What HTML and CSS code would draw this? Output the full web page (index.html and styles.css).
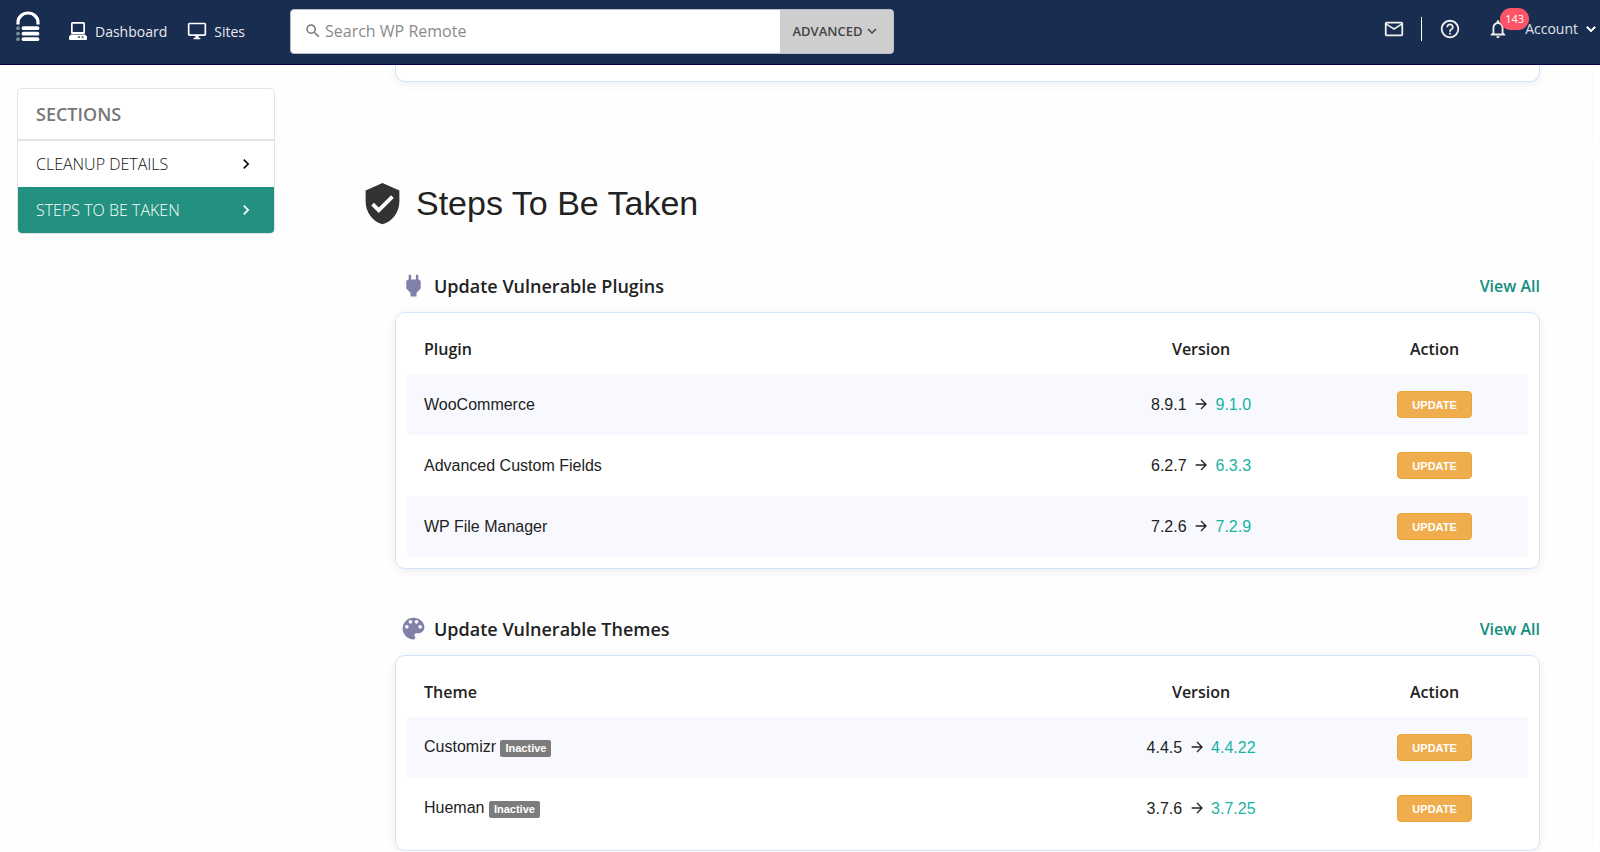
FILE: index.html
```html
<!DOCTYPE html>
<html lang="en">
<head>
  <meta charset="utf-8">
  <meta name="viewport" content="width=device-width, initial-scale=1">
  <title>WP Remote</title>
  <link rel="stylesheet" href="styles.css">
</head>
<body>
  <header class="navbar">
    <a class="logo" href="#" aria-label="Home">
      <svg width="24" height="32" viewBox="0 0 24 32">
        <path d="M2 13.5V11.5a10 9.5 0 0 1 20 0V13.5" fill="none" stroke="#fff" stroke-width="3.2"/>
        <g stroke="#fff" stroke-width="3.8" stroke-linecap="round">
          <path d="M7.500 17.200H21.500M7.500 22.700H21.500M7.500 28.200H21.500"/>
        </g>
        <g fill="#6f8f9c">
          <circle cx="2" cy="17.200" r="1.900"/><circle cx="2" cy="22.700" r="1.900"/><circle cx="2" cy="28.200" r="1.900"/>
        </g>
      </svg>
    </a>
    <nav class="nav-links">
      <a href="#">
        <svg width="20" height="20" viewBox="0 0 20 20" fill="#fff">
          <path fill-rule="evenodd" d="M4.500 1h11A1.500 1.500 0 0 1 17 2.500v9a1.500 1.500 0 0 1-1.500 1.500h-11A1.500 1.500 0 0 1 3 11.500v-9A1.500 1.500 0 0 1 4.500 1zM4.700 2.700v8.300h10.600V2.700z"/>
          <path fill-rule="evenodd" d="M3 13.500h14l2 2V18a1 1 0 0 1-1 1H2a1 1 0 0 1-1-1v-2.500zM10 15.500v1.200h2v-1.200zM13.500 15.500v1.200h2v-1.200z"/>
        </svg>
        Dashboard
      </a>
      <a href="#">
        <svg width="20" height="20" viewBox="0 0 24 24" fill="#fff"><path d="M21,16H3V4H21M21,2H3C1.890,2 1,2.890 1,4V16A2,2 0 0,0 3,18H10V20H8V22H16V20H14V18H21A2,2 0 0,0 23,16V4C23,2.890 22.100,2 21,2Z"/></svg>
        Sites
      </a>
    </nav>
    <form class="search">
      <svg width="18" height="18" viewBox="0 0 24 24" fill="#777"><path d="M15.500 14h-.79l-.28-.27A6.471 6.471 0 0 0 16 9.500 6.500 6.500 0 1 0 9.500 16c1.610 0 3.090-.59 4.230-1.570l.27.28v.79l5 4.990L20.490 19l-4.990-5zm-6 0C7.010 14 5 11.990 5 9.500S7.010 5 9.500 5 14 7.010 14 9.500 11.990 14 9.500 14z"/></svg>
      <input type="text" placeholder="Search WP Remote" aria-label="Search WP Remote">
      <button type="button" class="advanced">
        ADVANCED
        <svg width="18" height="18" viewBox="0 0 24 24" fill="#444"><path d="M16.590 8.590L12 13.170 7.410 8.590 6 10l6 6 6-6z"/></svg>
      </button>
    </form>
    <div class="nav-right">
      <a href="#" aria-label="Messages"><svg width="22" height="22" viewBox="0 0 24 24" fill="#eee"><path d="M22 6c0-1.100-.9-2-2-2H4c-1.100 0-2 .9-2 2v12c0 1.100.9 2 2 2h16c1.100 0 2-.9 2-2V6zm-2 0l-8 5-8-5h16zm0 12H4V8l8 5 8-5v10z"/></svg></a>
      <span class="divider"></span>
      <a href="#" aria-label="Help"><svg width="22" height="22" viewBox="0 0 24 24" fill="#eee"><path d="M11 18h2v-2h-2v2zm1-16C6.480 2 2 6.480 2 12s4.480 10 10 10 10-4.480 10-10S17.520 2 12 2zm0 18c-4.410 0-8-3.590-8-8s3.590-8 8-8 8 3.590 8 8-3.590 8-8 8zm0-14c-2.210 0-4 1.790-4 4h2c0-1.100.9-2 2-2s2 .9 2 2c0 2-3 1.750-3 5h2c0-2.250 3-2.500 3-5 0-2.210-1.790-4-4-4z"/></svg></a>
      <a href="#" class="bell" aria-label="Notifications">
        <svg width="22" height="22" viewBox="0 0 24 24" fill="#eee"><path d="M12 22c1.100 0 2-.9 2-2h-4c0 1.100.9 2 2 2zm6-6v-5c0-3.070-1.630-5.640-4.500-6.320V4c0-.83-.67-1.500-1.500-1.500s-1.500.67-1.500 1.500v.68C7.640 5.360 6 7.920 6 11v5l-2 2v1h16v-1l-2-2zm-2 1H8v-6c0-2.480 1.510-4.500 4-4.500s4 2.020 4 4.500v6z"/></svg>
        <span class="badge">143</span>
      </a>
      <a href="#" class="account">
        Account
        <svg width="18" height="18" viewBox="0 0 24 24" fill="#fff"><path d="M16.590 8.590L12 13.170 7.410 8.590 6 10l6 6 6-6z" stroke="#fff"/></svg>
      </a>
    </div>
  </header>

  <div class="layout">
    <aside class="sidebar">
      <h2>SECTIONS</h2>
      <a href="#">CLEANUP DETAILS <svg width="20" height="20" viewBox="0 0 24 24" fill="currentColor"><path d="M10 6L8.590 7.410 13.170 12l-4.580 4.590L10 18l6-6z"/></svg></a>
      <a href="#steps" class="active">STEPS TO BE TAKEN <svg width="20" height="20" viewBox="0 0 24 24" fill="currentColor"><path d="M10 6L8.590 7.410 13.170 12l-4.580 4.590L10 18l6-6z"/></svg></a>
    </aside>

    <main>
      <section class="panel panel-prev">
        <div class="card card-end"></div>
      </section>

      <section class="panel" id="steps">
        <h1>
          <svg width="45" height="45" viewBox="0 0 24 24" fill="#333"><path d="M12 1L3 5v6c0 5.550 3.840 10.740 9 12 5.160-1.260 9-6.450 9-12V5l-9-4zm-2 16l-4-4 1.410-1.410L10 14.170l6.590-6.590L18 9l-8 8z"/></svg>
          Steps To Be Taken
        </h1>

        <div class="block">
          <div class="block-head">
            <h3>
              <svg width="29" height="29" viewBox="0 0 24 24" fill="#8180a9"><path d="M16,7V3H14V7H10V3H8V7H8C7,7 6,8 6,9V14.500L9.500,18V21H14.500V18L18,14.500V9C18,8 17,7 16,7Z"/></svg>
              Update Vulnerable Plugins
            </h3>
            <a href="#">View All</a>
          </div>
          <div class="card">
            <table>
              <thead>
                <tr><th>Plugin</th><th class="col-version">Version</th><th class="col-action">Action</th></tr>
              </thead>
              <tbody>
                <tr>
                  <td>WooCommerce</td>
                  <td>8.9.1 <svg class="arrow" width="16" height="16" viewBox="0 0 24 24"><path d="M4 12H19M12 4.500L19.500 12 12 19.500"/></svg> <span class="new">9.1.0</span></td>
                  <td><button type="button">UPDATE</button></td>
                </tr>
                <tr>
                  <td>Advanced Custom Fields</td>
                  <td>6.2.7 <svg class="arrow" width="16" height="16" viewBox="0 0 24 24"><path d="M4 12H19M12 4.500L19.500 12 12 19.500"/></svg> <span class="new">6.3.3</span></td>
                  <td><button type="button">UPDATE</button></td>
                </tr>
                <tr>
                  <td>WP File Manager</td>
                  <td>7.2.6 <svg class="arrow" width="16" height="16" viewBox="0 0 24 24"><path d="M4 12H19M12 4.500L19.500 12 12 19.500"/></svg> <span class="new">7.2.9</span></td>
                  <td><button type="button">UPDATE</button></td>
                </tr>
              </tbody>
            </table>
          </div>
        </div>

        <div class="block">
          <div class="block-head">
            <h3>
              <svg width="29" height="29" viewBox="0 0 24 24" fill="#8180a9"><path d="M12 3c-4.970 0-9 4.030-9 9s4.030 9 9 9c.83 0 1.500-.67 1.500-1.500 0-.39-.15-.74-.39-1.010-.23-.26-.38-.61-.38-.99 0-.83.67-1.500 1.500-1.500H16c2.760 0 5-2.240 5-5 0-4.420-4.030-8-9-8zm-5.500 9c-.83 0-1.500-.67-1.500-1.500S5.670 9 6.500 9 8 9.670 8 10.500 7.330 12 6.500 12zm3-4C8.670 8 8 7.330 8 6.500S8.670 5 9.500 5s1.500.67 1.500 1.500S10.330 8 9.500 8zm5 0c-.83 0-1.500-.67-1.500-1.500S13.670 5 14.500 5s1.500.67 1.500 1.500S15.330 8 14.500 8zm3 4c-.83 0-1.500-.67-1.500-1.500S16.670 9 17.500 9s1.500.67 1.500 1.500-.67 1.500-1.500 1.500z"/></svg>
              Update Vulnerable Themes
            </h3>
            <a href="#">View All</a>
          </div>
          <div class="card">
            <table>
              <thead>
                <tr><th>Theme</th><th class="col-version">Version</th><th class="col-action">Action</th></tr>
              </thead>
              <tbody>
                <tr>
                  <td>Customizr <span class="label">Inactive</span></td>
                  <td>4.4.5 <svg class="arrow" width="16" height="16" viewBox="0 0 24 24"><path d="M4 12H19M12 4.500L19.500 12 12 19.500"/></svg> <span class="new">4.4.22</span></td>
                  <td><button type="button">UPDATE</button></td>
                </tr>
                <tr>
                  <td>Hueman <span class="label">Inactive</span></td>
                  <td>3.7.6 <svg class="arrow" width="16" height="16" viewBox="0 0 24 24"><path d="M4 12H19M12 4.500L19.500 12 12 19.500"/></svg> <span class="new">3.7.25</span></td>
                  <td><button type="button">UPDATE</button></td>
                </tr>
              </tbody>
            </table>
          </div>
        </div>
      </section>
    </main>
  </div>
</body>
</html>
```
FILE: styles.css
```css
* {
  box-sizing: border-box;
}

body {
  margin: 0;
  font-family: "Open Sans", sans-serif;
  background: #fefefe;
  color: #222;
}

a {
  text-decoration: none;
}

svg {
  display: block;
  flex: none;
}

/* Navbar */
.navbar {
  display: flex;
  align-items: center;
  height: 65px;
  padding: 0 0 2px 16px;
  background: #192d50;
  border-bottom: 1px solid #02024f;
}

.logo {
  margin: 0 28px 8px 0;
}

.nav-links {
  display: flex;
  flex: none;
  gap: 20px;
  width: 222px;
}

.nav-links a {
  display: flex;
  align-items: center;
  gap: 7px;
  color: #e8eaee;
  font-size: 14px;
}

.search {
  display: flex;
  flex: 1;
  align-items: center;
  max-width: 604px;
  height: 45px;
  padding-left: 13px;
  background: #fff;
  border: 1px solid #b8bcc6;
  border-radius: 4px;
  overflow: hidden;
}

.search input {
  flex: 1;
  min-width: 0;
  padding: 0 3px;
  border: 0;
  outline: 0;
  font-family: inherit;
  font-size: 16px;
}

.search input::placeholder {
  color: #8a8a8a;
}

.advanced {
  display: flex;
  align-items: center;
  justify-content: center;
  align-self: stretch;
  width: 113px;
  padding: 0;
  border: 0;
  background: #cecece;
  color: #444;
  font-family: inherit;
  font-size: 13px;
  font-weight: 600;
}

.nav-right {
  display: flex;
  align-items: center;
  margin: 0 0 5px auto;
}

.divider {
  width: 1px;
  height: 24px;
  margin: 0 17px 0 16px;
  background: #fff;
}

.bell {
  position: relative;
  margin: 0 16px 0 26px;
}

.badge {
  position: absolute;
  top: -10px;
  left: 13px;
  width: 29px;
  border-radius: 11px;
  background: #ff5468;
  color: #fff;
  font-size: 11px;
  line-height: 22px;
  text-align: center;
}

.account {
  display: flex;
  align-items: center;
  gap: 4px;
  color: #e0e3e9;
  font-size: 14px;
}

/* Layout */
.layout {
  display: grid;
  grid-template-columns: 258px 1fr;
  gap: 67px;
  padding: 0 7px 0 17px;
  align-items: start;
}

/* Sidebar */
.sidebar {
  margin-top: 23px;
  border: 1px solid #e2e2e2;
  border-radius: 5px;
  background: #fff;
  overflow: hidden;
}

.sidebar h2 {
  margin: 0;
  padding: 0 18px;
  border-bottom: 2px solid #e2e2e2;
  color: #777;
  font-size: 18px;
  font-weight: 600;
  line-height: 50px;
}

.sidebar a {
  display: flex;
  align-items: center;
  justify-content: space-between;
  padding: 0 18px;
  color: #111;
  font-size: 16px;
  font-weight: 300;
  line-height: 46px;
}

.sidebar a.active {
  background: #239180;
  color: #fff;
}

/* Panels */
.panel {
  margin-bottom: 8px;
  padding: 0 52px;
  border: 1px solid #fafafa;
  border-radius: 5px;
}

.panel:last-child {
  margin-bottom: 0;
  border-bottom: 0;
}

.panel-prev {
  padding-bottom: 64px;
  border-top: 0;
  border-radius: 0 0 5px 5px;
}

.panel h1 {
  display: flex;
  align-items: center;
  gap: 11px;
  margin: 25px 0 0 -35px;
  font-family: "Liberation Sans", Arial, sans-serif;
  font-size: 34px;
  font-weight: 400;
  line-height: 45px;
}

.block {
  margin-top: 45px;
}

.block-head {
  display: flex;
  align-items: center;
  justify-content: space-between;
  margin-bottom: 12px;
}

.block-head h3 {
  display: flex;
  align-items: center;
  gap: 6px;
  margin: 0 0 0 4px;
  color: #222;
  font-size: 18px;
  font-weight: 600;
}

.block-head a {
  color: #108e7b;
  font-size: 16px;
  font-weight: 600;
}

.card {
  padding: 11px;
  background: #fff;
  border: 1px solid #d5e5f9;
  border-radius: 10px;
  box-shadow: 0 2px 10px rgba(0, 0, 0, 0.07);
}

.card-end {
  height: 17px;
  padding: 0;
  border-top: 0;
  border-radius: 0 0 10px 10px;
}

/* Tables */
table {
  width: 100%;
  table-layout: fixed;
  border-collapse: collapse;
}

th {
  height: 50px;
  padding: 0 17px;
  color: #222;
  font-size: 16px;
  font-weight: 600;
}

td {
  height: 61px;
  padding: 0 17px;
  font-family: "Liberation Sans", Arial, sans-serif;
  font-size: 16px;
  text-align: center;
}

th:first-child,
td:first-child {
  text-align: left;
}

tbody tr:nth-child(odd) {
  background: #f7f9fe;
}

.col-version {
  width: 25%;
}

.col-action {
  width: calc(100% / 6);
}

.arrow {
  display: inline-block;
  margin: 0 2px;
  vertical-align: -2px;
  fill: none;
  stroke: #222;
  stroke-width: 2;
}

.new {
  color: #17b3a3;
}

.label {
  display: inline-block;
  padding: 0 5px;
  border-radius: 2px;
  background: #7c7c7c;
  color: #fff;
  font-size: 11px;
  font-weight: 700;
  line-height: 17px;
}

td button {
  width: 75px;
  height: 27px;
  padding: 0;
  border: 1px solid #eea236;
  border-radius: 4px;
  background: #f0ad4e;
  color: #fff;
  font-family: "Liberation Sans", Arial, sans-serif;
  font-size: 11px;
  font-weight: 700;
}
```
